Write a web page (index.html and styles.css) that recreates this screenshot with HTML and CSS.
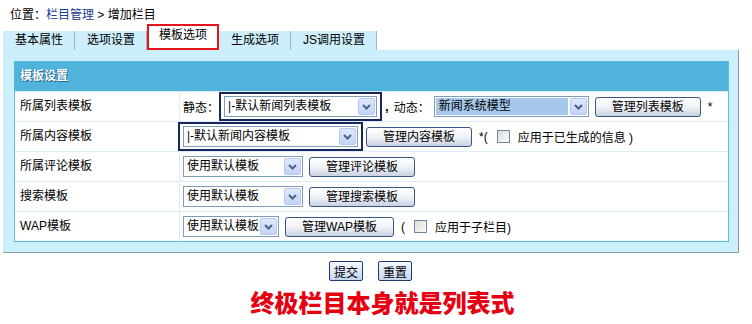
FILE: index.html
```html
<!doctype html>
<html lang="zh-CN">
<head>
    <meta charset="UTF-8">
    <title>增加栏目</title>
    <link rel="stylesheet" href="styles.css">
</head>
<body>
    <div class="crumb">位置：<a href="#">栏目管理</a> &gt; 增加栏目</div>

    <div class="tabs">
        <span class="tab">基本属性</span>
        <span class="tab">选项设置</span>
        <span class="tab on">模板选项</span>
        <span class="tab">生成选项</span>
        <span class="tab">JS调用设置</span>
    </div>

    <div class="panel">
        <div class="form">
            <div class="form--head">模板设置</div>

            <div class="row">
                <div class="label">所属列表模板</div>
                <div class="field">
                    静态：<span class="mark">
                        <span class="select s-list"><span class="val">|-默认新闻列表模板</span><span class="arrow"><svg width="9" height="6" viewBox="0 0 9 6"><path d="M1 1 L4.5 4.5 L8 1" fill="none" stroke="#4d6185" stroke-width="2"/></svg></span></span>
                    </span><b class="comma">,</b>动态：<span class="select s-model hl"><span class="val">新闻系统模型</span><span class="arrow"><svg width="9" height="6" viewBox="0 0 9 6"><path d="M1 1 L4.5 4.5 L8 1" fill="none" stroke="#4d6185" stroke-width="2"/></svg></span></span>
                    <button class="btn">管理列表模板</button>
                    <span class="note">*</span>
                </div>
            </div>

            <div class="row">
                <div class="label">所属内容模板</div>
                <div class="field">
                    <span class="mark pull">
                        <span class="select s-content"><span class="val">|-默认新闻内容模板</span><span class="arrow"><svg width="9" height="6" viewBox="0 0 9 6"><path d="M1 1 L4.5 4.5 L8 1" fill="none" stroke="#4d6185" stroke-width="2"/></svg></span></span>
                    </span>
                    <button class="btn">管理内容模板</button>
                    <span class="note">*(</span><span class="check"></span><span class="note">应用于已生成的信息 )</span>
                </div>
            </div>

            <div class="row">
                <div class="label">所属评论模板</div>
                <div class="field">
                    <span class="select s-use"><span class="val">使用默认模板</span><span class="arrow"><svg width="9" height="6" viewBox="0 0 9 6"><path d="M1 1 L4.5 4.5 L8 1" fill="none" stroke="#4d6185" stroke-width="2"/></svg></span></span>
                    <button class="btn">管理评论模板</button>
                </div>
            </div>

            <div class="row">
                <div class="label">搜索模板</div>
                <div class="field">
                    <span class="select s-use"><span class="val">使用默认模板</span><span class="arrow"><svg width="9" height="6" viewBox="0 0 9 6"><path d="M1 1 L4.5 4.5 L8 1" fill="none" stroke="#4d6185" stroke-width="2"/></svg></span></span>
                    <button class="btn">管理搜索模板</button>
                </div>
            </div>

            <div class="row">
                <div class="label">WAP模板</div>
                <div class="field">
                    <span class="select s-wap"><span class="val">使用默认模板</span><span class="arrow"><svg width="9" height="6" viewBox="0 0 9 6"><path d="M1 1 L4.5 4.5 L8 1" fill="none" stroke="#4d6185" stroke-width="2"/></svg></span></span>
                    <button class="btn">管理WAP模板</button>
                    <span class="note">(</span><span class="check"></span><span class="note">应用于子栏目)</span>
                </div>
            </div>
        </div>
    </div>

    <div class="actions">
        <button class="small">提交</button>
        <button class="small">重置</button>
    </div>

    <h2 class="tip">终极栏目本身就是列表式</h2>
</body>
</html>
```

FILE: styles.css
```css
body {
    margin: 0;
    background: #fff;
    color: #000;
    font-family: "Liberation Sans", "Noto Sans CJK SC", sans-serif;
    font-size: 12px;
}

.crumb {
    height: 24px;
    padding-left: 10px;
    line-height: 30px;
}

.crumb a {
    color: #1b3b8f;
    text-decoration: none;
}

.tabs {
    display: flex;
    align-items: flex-end;
    height: 26px;
    margin-left: 3px;
}

.tab {
    height: 19px;
    padding: 0 11px 0 12px;
    line-height: 19px;
    background: #cdeefa;
    border-right: 1px solid #a4b4ba;
}

.tab.on {
    height: 22px;
    padding: 0 10px;
    line-height: 18px;
    background: #fff;
    border: 2px solid #e3141b;
}

.panel {
    width: 716px;
    margin-left: 3px;
    padding: 11px 8px 10px 11px;
    background: #ccf0fb;
    border-right: 1px solid #8f9ea4;
    border-bottom: 1px solid #8f9ea4;
}

.form {
    width: 713px;
    border: 1px solid #55bde0;
    background: #fff;
}

.form--head {
    height: 29px;
    padding-left: 5px;
    line-height: 29px;
    background: #4fb3dc;
    color: #fff;
    font-weight: bold;
    text-shadow: 1px 1px 0 #24688c, -1px 0 0 #3c86ab;
}

.row {
    display: flex;
    height: 29px;
    border-top: 1px solid #dbeef5;
}

.label {
    width: 159px;
    padding-left: 5px;
    line-height: 29px;
    border-right: 1px solid #dbeef5;
}

.field {
    flex: 1;
    display: flex;
    align-items: center;
    padding-left: 3px;
    white-space: nowrap;
}

.mark {
    display: inline-flex;
    padding: 2px 3px;
    border: 2px solid #17275e;
}

.mark.pull {
    margin-left: -5px;
}

.comma {
    margin: 0 5px 0 3px;
    font-size: 13px;
}

.select {
    display: inline-flex;
    align-items: center;
    height: 21px;
    box-sizing: border-box;
    border: 1px solid #7f9db9;
    background: #fff;
}

.select .val {
    flex: 1;
    height: 19px;
    padding-left: 3px;
    line-height: 19px;
}

.select.hl .val {
    margin: 1px 2px 1px 1px;
    height: 17px;
    line-height: 17px;
    background: #a6c8eb;
}

.arrow {
    display: flex;
    align-items: center;
    justify-content: center;
    width: 15px;
    height: 15px;
    margin-right: 1px;
    border: 1px solid #b7c9f2;
    border-radius: 2px;
    background: linear-gradient(#dfe8fd, #c3d3f8);
}

.s-list { width: 153px; }
.s-model { width: 155px; margin-left: 4px; }
.s-content { width: 175px; }
.s-use { width: 120px; }
.s-wap { width: 96px; }

.btn {
    height: 20px;
    margin-left: 6px;
    padding: 0 16px;
    box-sizing: border-box;
    border: 1px solid #3a5683;
    border-radius: 3px;
    background: linear-gradient(#ffffff, #f0f2f7 50%, #c9d1e2);
    font-family: inherit;
    font-size: 12px;
    line-height: 18px;
    color: #000;
}

.mark + .btn {
    margin-left: 3px;
}

.note {
    margin-left: 7px;
}

.check {
    width: 11px;
    height: 11px;
    margin-left: 9px;
    border: 1px solid #6f86a3;
    background: linear-gradient(135deg, #dcdcd6, #fbfbf9);
}

.check + .note {
    margin-left: 8px;
}

.actions {
    display: flex;
    justify-content: center;
    gap: 15px;
    width: 741px;
    margin-top: 8px;
}

.small {
    height: 20px;
    padding: 0 4px;
    border: 1px solid #1d3a6a;
    border-radius: 2px;
    background: linear-gradient(#f6f9ff, #c4d5ef);
    font-family: inherit;
    font-size: 12px;
    color: #000;
}

.tip {
    width: 717px;
    margin: 6px 0 0;
    padding-left: 24px;
    text-align: center;
    color: #e60012;
    font-family: "Noto Sans CJK SC", sans-serif;
    font-size: 24px;
    font-weight: 900;
    line-height: 30px;
}
```
